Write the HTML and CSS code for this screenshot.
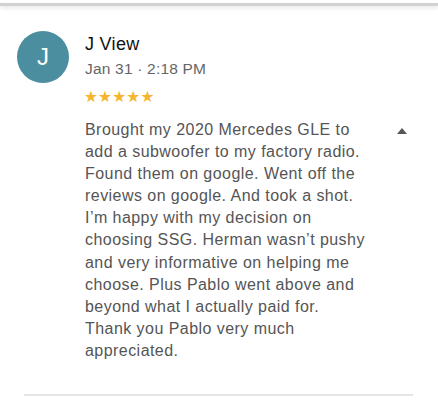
FILE: index.html
```html
<!DOCTYPE html>
<html>
<head>
<meta charset="utf-8">
<link rel="stylesheet" href="styles.css">
</head>
<body>
<div class="topbar"></div>
<div class="review">
  <div class="avatar">J</div>
  <div class="content">
    <div class="name">J View</div>
    <div class="date">Jan 31 · 2:18 PM</div>
    <div class="stars">★★★★★</div>
    <p class="text">Brought my 2020 Mercedes GLE to add a subwoofer to my factory radio. Found them on google. Went off the reviews on google. And took a shot. I’m happy with my decision on choosing SSG. Herman wasn’t pushy and very informative on helping me choose. Plus Pablo went above and beyond what I actually paid for. Thank you Pablo very much appreciated.</p>
  </div>
  <div class="caret"></div>
</div>
<div class="divider"></div>
</body>
</html>
```
FILE: styles.css
```css
html, body {
  margin: 0;
  padding: 0;
  background: #fff;
  font-family: "Liberation Sans", Arial, sans-serif;
}
.topbar {
  margin-top: 3px;
  height: 3px;
  background: #d2d2d2;
  box-shadow: 0 2px 4px rgba(0,0,0,0.12);
}
.review {
  display: flex;
  align-items: flex-start;
  padding: 0 0 0 17px;
}
.avatar {
  flex: none;
  width: 52px;
  height: 52px;
  margin-top: 25px;
  border-radius: 50%;
  background: #4b8e9f;
  color: #fff;
  font-size: 24px;
  display: flex;
  align-items: center;
  justify-content: center;
}
.content {
  margin-left: 16px;
  margin-top: 28px;
  width: 282px;
}
.name {
  font-size: 18px;
  line-height: 20px;
  letter-spacing: 0.3px;
  color: #111;
}
.date {
  margin-top: 5px;
  font-size: 15.5px;
  line-height: 20px;
  letter-spacing: 0.2px;
  color: #666;
}
.stars {
  margin-top: 10px;
  margin-left: -1px;
  font-family: "DejaVu Sans", sans-serif;
  font-size: 15.5px;
  line-height: 17px;
  letter-spacing: 0.2px;
  color: #f5b52e;
}
.text {
  margin: 13px 0 0 0;
  font-size: 16px;
  line-height: 22.1px;
  letter-spacing: 0.45px;
  color: #555;
}
.caret {
  flex: none;
  margin: 122px 0 0 30px;
  width: 0;
  height: 0;
  border-left: 5px solid transparent;
  border-right: 5px solid transparent;
  border-bottom: 6px solid #555;
}
.divider {
  margin: 32px 25px 0 24px;
  height: 2px;
  background: #e6e6e6;
}
```
